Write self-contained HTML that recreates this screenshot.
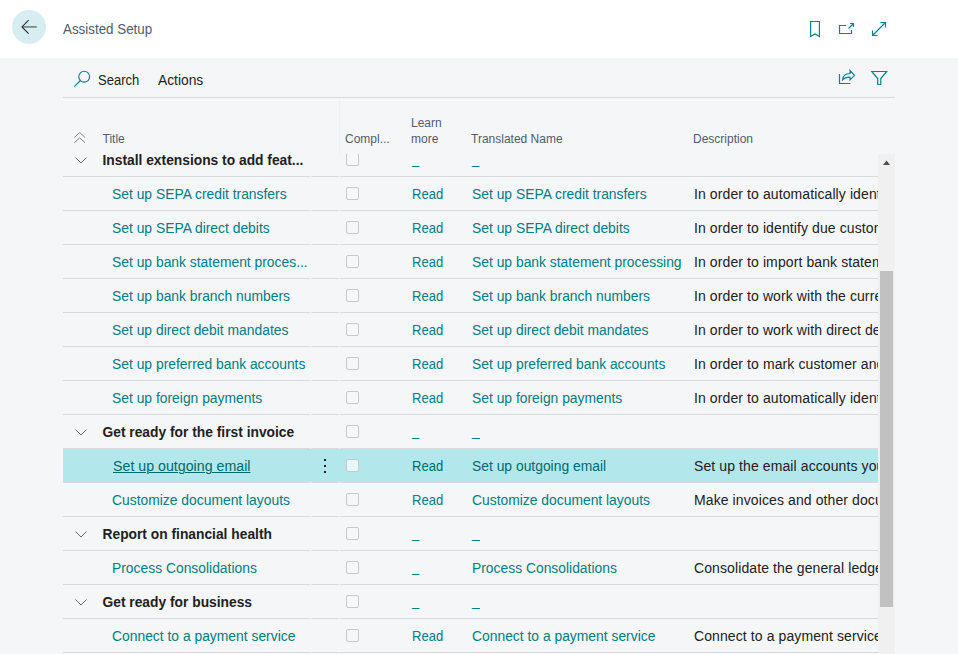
<!DOCTYPE html>
<html><head><meta charset="utf-8"><style>
html,body{margin:0;padding:0;width:958px;height:654px;overflow:hidden;background:#f5f6f8;font-family:"Liberation Sans",sans-serif;}
.top{position:absolute;left:0;top:0;width:958px;height:58px;background:#fff;}
.t{position:absolute;white-space:nowrap;}
.ic{position:absolute;overflow:visible;}
.tbl{position:absolute;left:63px;top:98px;width:815px;height:556px;overflow:hidden;}
.tbl .inner{position:absolute;left:-63px;top:-98px;width:958px;height:654px;}
.ln{position:absolute;height:1px;background:#d8dadd;}
.sel{position:absolute;left:63px;width:815px;height:33px;background:#b2e8ec;top:0}
.cb{position:absolute;width:11px;height:11px;border:1px solid #c8c8c8;border-radius:2px;}
.dot{position:absolute;width:2px;height:2px;background:#212121;}
.hdr{position:absolute;left:63px;top:98px;width:815px;height:56px;background:#f5f6f8;}
</style></head><body>
<div class="top"></div>
<div style="position:absolute;left:12px;top:10px;width:34px;height:34px;border-radius:50%;background:#d6eef1"></div>
<svg class="ic" style="left:0;top:0" width="60" height="58" viewBox="0 0 60 58"><path d="M22.5 26.9 H36.8" fill="none" stroke="#6f7777" stroke-width="1.5"/><path d="M28.6 20.2 L22 26.9 L28.6 33.6" fill="none" stroke="#2a2a2a" stroke-width="1.1"/></svg>
<div class="t" style="left:63px;top:20px;font-size:14px;line-height:18px;color:#505c6d;transform:scaleX(0.955);transform-origin:0 0">Assisted Setup</div>
<svg class="ic" style="left:800px;top:10px" width="100" height="40" viewBox="0 0 100 40">
<path d="M10.6 11.5 H19.4 V26.5 L15 24 L10.6 26.5 Z" fill="none" stroke="#00838a" stroke-width="1.2"/>
<path d="M46 15.5 H39.5 V23.5 H51.5 V20" fill="none" stroke="#00838a" stroke-width="1.2"/>
<path d="M48.5 18.5 L53.5 13.5 M50 13.5 H53.5 V17" fill="none" stroke="#00838a" stroke-width="1.2"/>
<path d="M72.5 25.5 L85.5 12.5 M80.5 12.5 H85.5 V17.5 M72.5 20.5 V25.5 H77.5" fill="none" stroke="#00838a" stroke-width="1.2"/>
</svg>
<svg class="ic" style="left:60px;top:60px" width="40" height="36" viewBox="0 0 40 36"><circle cx="24.2" cy="16.7" r="5.4" fill="none" stroke="#00838a" stroke-width="1.1"/><path d="M20.4 20.5 L14.3 26.6" fill="none" stroke="#00838a" stroke-width="1.1"/></svg>
<div class="t" style="left:98px;top:70.5px;font-size:14px;line-height:18px;color:#212121;transform:scaleX(0.93);transform-origin:0 0">Search</div>
<div class="t" style="left:158px;top:70.5px;font-size:14px;line-height:18px;color:#212121;transform:scaleX(0.985);transform-origin:0 0">Actions</div>
<svg class="ic" style="left:830px;top:60px" width="70" height="36" viewBox="0 0 70 36">
<path d="M9.5 14 V23.5 H20.5" fill="none" stroke="#00838a" stroke-width="1.2"/>
<path d="M12.5 20 C13 15 17 13.5 20 13.5 V10.5 L24.5 15.3 L20 20 V17.2 C17 17 14.5 17.8 12.5 20 Z" fill="none" stroke="#00838a" stroke-width="1.1"/>
<path d="M41.8 11.5 H56.7 L50.8 18.5 V24.5 H47.7 V18.5 Z" fill="none" stroke="#00838a" stroke-width="1.2"/>
</svg>
<div style="position:absolute;left:63px;top:97px;width:832px;height:1px;background:#d8d8dc"></div>
<div class="tbl"><div class="inner">
<svg class="ic" style="left:74.8px;top:156.6px" width="12" height="8" viewBox="0 0 12 8"><path d="M0.5 0.5 L6 6 L11.5 0.5" fill="none" stroke="#6a6a6a" stroke-width="1"/></svg>
<div class="cb" style="left:346px;top:153px;background:#f7f7f7"></div>
<div class="ln" style="top:176px;left:63px;width:247px"></div><div class="ln" style="top:176px;left:311px;width:28px"></div><div class="ln" style="top:176px;left:340px;width:538px"></div>
<div class="cb" style="left:346px;top:187px;background:#f7f7f7"></div>
<div class="ln" style="top:210px;left:63px;width:247px"></div><div class="ln" style="top:210px;left:311px;width:28px"></div><div class="ln" style="top:210px;left:340px;width:538px"></div>
<div class="cb" style="left:346px;top:221px;background:#f7f7f7"></div>
<div class="ln" style="top:244px;left:63px;width:247px"></div><div class="ln" style="top:244px;left:311px;width:28px"></div><div class="ln" style="top:244px;left:340px;width:538px"></div>
<div class="cb" style="left:346px;top:255px;background:#f7f7f7"></div>
<div class="ln" style="top:278px;left:63px;width:247px"></div><div class="ln" style="top:278px;left:311px;width:28px"></div><div class="ln" style="top:278px;left:340px;width:538px"></div>
<div class="cb" style="left:346px;top:289px;background:#f7f7f7"></div>
<div class="ln" style="top:312px;left:63px;width:247px"></div><div class="ln" style="top:312px;left:311px;width:28px"></div><div class="ln" style="top:312px;left:340px;width:538px"></div>
<div class="cb" style="left:346px;top:323px;background:#f7f7f7"></div>
<div class="ln" style="top:346px;left:63px;width:247px"></div><div class="ln" style="top:346px;left:311px;width:28px"></div><div class="ln" style="top:346px;left:340px;width:538px"></div>
<div class="cb" style="left:346px;top:357px;background:#f7f7f7"></div>
<div class="ln" style="top:380px;left:63px;width:247px"></div><div class="ln" style="top:380px;left:311px;width:28px"></div><div class="ln" style="top:380px;left:340px;width:538px"></div>
<div class="cb" style="left:346px;top:391px;background:#f7f7f7"></div>
<div class="ln" style="top:414px;left:63px;width:247px"></div><div class="ln" style="top:414px;left:311px;width:28px"></div><div class="ln" style="top:414px;left:340px;width:538px"></div>
<svg class="ic" style="left:74.8px;top:428.6px" width="12" height="8" viewBox="0 0 12 8"><path d="M0.5 0.5 L6 6 L11.5 0.5" fill="none" stroke="#6a6a6a" stroke-width="1"/></svg>
<div class="cb" style="left:346px;top:425px;background:#f7f7f7"></div>
<div class="ln" style="top:448px;left:63px;width:247px"></div><div class="ln" style="top:448px;left:311px;width:28px"></div><div class="ln" style="top:448px;left:340px;width:538px"></div>
<div class="sel" style="top:449px"></div>
<div class="dot" style="left:324px;top:459px"></div><div class="dot" style="left:324px;top:465px"></div><div class="dot" style="left:324px;top:471px"></div>
<div class="cb" style="left:346px;top:459px;background:#e8f7f9"></div>
<div class="ln" style="top:482px;left:63px;width:247px"></div><div class="ln" style="top:482px;left:311px;width:28px"></div><div class="ln" style="top:482px;left:340px;width:538px"></div>
<div class="cb" style="left:346px;top:493px;background:#f7f7f7"></div>
<div class="ln" style="top:516px;left:63px;width:247px"></div><div class="ln" style="top:516px;left:311px;width:28px"></div><div class="ln" style="top:516px;left:340px;width:538px"></div>
<svg class="ic" style="left:74.8px;top:530.6px" width="12" height="8" viewBox="0 0 12 8"><path d="M0.5 0.5 L6 6 L11.5 0.5" fill="none" stroke="#6a6a6a" stroke-width="1"/></svg>
<div class="cb" style="left:346px;top:527px;background:#f7f7f7"></div>
<div class="ln" style="top:550px;left:63px;width:247px"></div><div class="ln" style="top:550px;left:311px;width:28px"></div><div class="ln" style="top:550px;left:340px;width:538px"></div>
<div class="cb" style="left:346px;top:561px;background:#f7f7f7"></div>
<div class="ln" style="top:584px;left:63px;width:247px"></div><div class="ln" style="top:584px;left:311px;width:28px"></div><div class="ln" style="top:584px;left:340px;width:538px"></div>
<svg class="ic" style="left:74.8px;top:598.6px" width="12" height="8" viewBox="0 0 12 8"><path d="M0.5 0.5 L6 6 L11.5 0.5" fill="none" stroke="#6a6a6a" stroke-width="1"/></svg>
<div class="cb" style="left:346px;top:595px;background:#f7f7f7"></div>
<div class="ln" style="top:618px;left:63px;width:247px"></div><div class="ln" style="top:618px;left:311px;width:28px"></div><div class="ln" style="top:618px;left:340px;width:538px"></div>
<div class="cb" style="left:346px;top:629px;background:#f7f7f7"></div>
<div class="ln" style="top:652px;left:63px;width:247px"></div><div class="ln" style="top:652px;left:311px;width:28px"></div><div class="ln" style="top:652px;left:340px;width:538px"></div>
<div class="t" style="left:102.5px;top:152.94px;font-size:13.8px;line-height:16px;color:#212121;font-weight:bold;">Install extensions to add feat...</div>
<div class="t" style="left:412px;top:151.37px;font-size:14px;line-height:16px;color:#007c83;font-weight:normal;transform:scaleX(0.93);transform-origin:0 0;">_</div>
<div class="t" style="left:472px;top:151.37px;font-size:14px;line-height:16px;color:#007c83;font-weight:normal;transform:scaleX(0.93);transform-origin:0 0;">_</div>
<div class="t" style="left:112px;top:186.37px;font-size:14px;line-height:16px;color:#007c83;font-weight:normal;transform:scaleX(0.99);transform-origin:0 0;">Set up SEPA credit transfers</div>
<div class="t" style="left:412px;top:186.37px;font-size:14px;line-height:16px;color:#007c83;font-weight:normal;transform:scaleX(0.93);transform-origin:0 0;">Read</div>
<div class="t" style="left:471.8px;top:186.37px;font-size:14px;line-height:16px;color:#007c83;font-weight:normal;transform:scaleX(0.99);transform-origin:0 0;">Set up SEPA credit transfers</div>
<div class="t" style="left:694px;top:186.37px;font-size:14px;line-height:16px;color:#212121;font-weight:normal;letter-spacing:0.1px;">In order to automatically identify</div>
<div class="t" style="left:112px;top:220.37px;font-size:14px;line-height:16px;color:#007c83;font-weight:normal;transform:scaleX(0.99);transform-origin:0 0;">Set up SEPA direct debits</div>
<div class="t" style="left:412px;top:220.37px;font-size:14px;line-height:16px;color:#007c83;font-weight:normal;transform:scaleX(0.93);transform-origin:0 0;">Read</div>
<div class="t" style="left:471.8px;top:220.37px;font-size:14px;line-height:16px;color:#007c83;font-weight:normal;transform:scaleX(0.99);transform-origin:0 0;">Set up SEPA direct debits</div>
<div class="t" style="left:694px;top:220.37px;font-size:14px;line-height:16px;color:#212121;font-weight:normal;letter-spacing:0.1px;">In order to identify due customer</div>
<div class="t" style="left:112px;top:254.37px;font-size:14px;line-height:16px;color:#007c83;font-weight:normal;transform:scaleX(0.99);transform-origin:0 0;">Set up bank statement proces...</div>
<div class="t" style="left:412px;top:254.37px;font-size:14px;line-height:16px;color:#007c83;font-weight:normal;transform:scaleX(0.93);transform-origin:0 0;">Read</div>
<div class="t" style="left:471.8px;top:254.37px;font-size:14px;line-height:16px;color:#007c83;font-weight:normal;transform:scaleX(0.99);transform-origin:0 0;">Set up bank statement processing</div>
<div class="t" style="left:694px;top:254.37px;font-size:14px;line-height:16px;color:#212121;font-weight:normal;letter-spacing:0.1px;">In order to import bank statements</div>
<div class="t" style="left:112px;top:288.37px;font-size:14px;line-height:16px;color:#007c83;font-weight:normal;transform:scaleX(0.99);transform-origin:0 0;">Set up bank branch numbers</div>
<div class="t" style="left:412px;top:288.37px;font-size:14px;line-height:16px;color:#007c83;font-weight:normal;transform:scaleX(0.93);transform-origin:0 0;">Read</div>
<div class="t" style="left:471.8px;top:288.37px;font-size:14px;line-height:16px;color:#007c83;font-weight:normal;transform:scaleX(0.99);transform-origin:0 0;">Set up bank branch numbers</div>
<div class="t" style="left:694px;top:288.37px;font-size:14px;line-height:16px;color:#212121;font-weight:normal;letter-spacing:0.1px;">In order to work with the currency</div>
<div class="t" style="left:112px;top:322.37px;font-size:14px;line-height:16px;color:#007c83;font-weight:normal;transform:scaleX(0.99);transform-origin:0 0;">Set up direct debit mandates</div>
<div class="t" style="left:412px;top:322.37px;font-size:14px;line-height:16px;color:#007c83;font-weight:normal;transform:scaleX(0.93);transform-origin:0 0;">Read</div>
<div class="t" style="left:471.8px;top:322.37px;font-size:14px;line-height:16px;color:#007c83;font-weight:normal;transform:scaleX(0.99);transform-origin:0 0;">Set up direct debit mandates</div>
<div class="t" style="left:694px;top:322.37px;font-size:14px;line-height:16px;color:#212121;font-weight:normal;letter-spacing:0.1px;">In order to work with direct debits</div>
<div class="t" style="left:112px;top:356.37px;font-size:14px;line-height:16px;color:#007c83;font-weight:normal;transform:scaleX(0.99);transform-origin:0 0;">Set up preferred bank accounts</div>
<div class="t" style="left:412px;top:356.37px;font-size:14px;line-height:16px;color:#007c83;font-weight:normal;transform:scaleX(0.93);transform-origin:0 0;">Read</div>
<div class="t" style="left:471.8px;top:356.37px;font-size:14px;line-height:16px;color:#007c83;font-weight:normal;transform:scaleX(0.99);transform-origin:0 0;">Set up preferred bank accounts</div>
<div class="t" style="left:694px;top:356.37px;font-size:14px;line-height:16px;color:#212121;font-weight:normal;letter-spacing:0.1px;">In order to mark customer and</div>
<div class="t" style="left:112px;top:390.37px;font-size:14px;line-height:16px;color:#007c83;font-weight:normal;transform:scaleX(0.99);transform-origin:0 0;">Set up foreign payments</div>
<div class="t" style="left:412px;top:390.37px;font-size:14px;line-height:16px;color:#007c83;font-weight:normal;transform:scaleX(0.93);transform-origin:0 0;">Read</div>
<div class="t" style="left:471.8px;top:390.37px;font-size:14px;line-height:16px;color:#007c83;font-weight:normal;transform:scaleX(0.99);transform-origin:0 0;">Set up foreign payments</div>
<div class="t" style="left:694px;top:390.37px;font-size:14px;line-height:16px;color:#212121;font-weight:normal;letter-spacing:0.1px;">In order to automatically identify</div>
<div class="t" style="left:102.5px;top:425.44px;font-size:13.8px;line-height:16px;color:#212121;font-weight:bold;">Get ready for the first invoice</div>
<div class="t" style="left:412px;top:423.37px;font-size:14px;line-height:16px;color:#007c83;font-weight:normal;transform:scaleX(0.93);transform-origin:0 0;">_</div>
<div class="t" style="left:471.8px;top:423.37px;font-size:14px;line-height:16px;color:#007c83;font-weight:normal;transform:scaleX(0.99);transform-origin:0 0;">_</div>
<div class="t" style="left:113px;top:458.37px;font-size:14px;line-height:16px;color:#006870;font-weight:normal;transform:scaleX(1.015);transform-origin:0 0;text-decoration:underline;text-underline-offset:1px;text-decoration-thickness:1px;">Set up outgoing email</div>
<div class="t" style="left:412px;top:458.37px;font-size:14px;line-height:16px;color:#006870;font-weight:normal;transform:scaleX(0.93);transform-origin:0 0;">Read</div>
<div class="t" style="left:471.8px;top:458.37px;font-size:14px;line-height:16px;color:#006870;font-weight:normal;transform:scaleX(0.99);transform-origin:0 0;">Set up outgoing email</div>
<div class="t" style="left:694px;top:458.37px;font-size:14px;line-height:16px;color:#212121;font-weight:normal;letter-spacing:0.1px;">Set up the email accounts your</div>
<div class="t" style="left:112px;top:492.37px;font-size:14px;line-height:16px;color:#007c83;font-weight:normal;transform:scaleX(0.99);transform-origin:0 0;">Customize document layouts</div>
<div class="t" style="left:412px;top:492.37px;font-size:14px;line-height:16px;color:#007c83;font-weight:normal;transform:scaleX(0.93);transform-origin:0 0;">Read</div>
<div class="t" style="left:471.8px;top:492.37px;font-size:14px;line-height:16px;color:#007c83;font-weight:normal;transform:scaleX(0.99);transform-origin:0 0;">Customize document layouts</div>
<div class="t" style="left:694px;top:492.37px;font-size:14px;line-height:16px;color:#212121;font-weight:normal;letter-spacing:0.1px;">Make invoices and other documents</div>
<div class="t" style="left:102.5px;top:527.44px;font-size:13.8px;line-height:16px;color:#212121;font-weight:bold;">Report on financial health</div>
<div class="t" style="left:412px;top:525.37px;font-size:14px;line-height:16px;color:#007c83;font-weight:normal;transform:scaleX(0.93);transform-origin:0 0;">_</div>
<div class="t" style="left:471.8px;top:525.37px;font-size:14px;line-height:16px;color:#007c83;font-weight:normal;transform:scaleX(0.99);transform-origin:0 0;">_</div>
<div class="t" style="left:112px;top:560.37px;font-size:14px;line-height:16px;color:#007c83;font-weight:normal;transform:scaleX(0.99);transform-origin:0 0;">Process Consolidations</div>
<div class="t" style="left:412px;top:559.37px;font-size:14px;line-height:16px;color:#007c83;font-weight:normal;transform:scaleX(0.93);transform-origin:0 0;">_</div>
<div class="t" style="left:471.8px;top:560.37px;font-size:14px;line-height:16px;color:#007c83;font-weight:normal;transform:scaleX(0.99);transform-origin:0 0;">Process Consolidations</div>
<div class="t" style="left:694px;top:560.37px;font-size:14px;line-height:16px;color:#212121;font-weight:normal;letter-spacing:0.1px;">Consolidate the general ledger</div>
<div class="t" style="left:102.5px;top:595.44px;font-size:13.8px;line-height:16px;color:#212121;font-weight:bold;">Get ready for business</div>
<div class="t" style="left:412px;top:593.37px;font-size:14px;line-height:16px;color:#007c83;font-weight:normal;transform:scaleX(0.93);transform-origin:0 0;">_</div>
<div class="t" style="left:471.8px;top:593.37px;font-size:14px;line-height:16px;color:#007c83;font-weight:normal;transform:scaleX(0.99);transform-origin:0 0;">_</div>
<div class="t" style="left:112px;top:628.37px;font-size:14px;line-height:16px;color:#007c83;font-weight:normal;transform:scaleX(0.99);transform-origin:0 0;">Connect to a payment service</div>
<div class="t" style="left:412px;top:628.37px;font-size:14px;line-height:16px;color:#007c83;font-weight:normal;transform:scaleX(0.93);transform-origin:0 0;">Read</div>
<div class="t" style="left:471.8px;top:628.37px;font-size:14px;line-height:16px;color:#007c83;font-weight:normal;transform:scaleX(0.99);transform-origin:0 0;">Connect to a payment service</div>
<div class="t" style="left:694px;top:628.37px;font-size:14px;line-height:16px;color:#212121;font-weight:normal;letter-spacing:0.1px;">Connect to a payment service to</div>
</div></div>
<div class="hdr"></div>
<div style="position:absolute;left:339px;top:98px;width:1px;height:56px;background:#eef0f2"></div>
<svg class="ic" style="left:70px;top:128px" width="20" height="20" viewBox="0 0 20 20"><path d="M4.3 9.5 L9.7 4.5 L15.1 9.5 M4.3 14.8 L9.7 9.8 L15.1 14.8" fill="none" stroke="#808080" stroke-width="1"/></svg>
<div class="t" style="left:102.5px;top:131px;font-size:12px;line-height:16px;color:#505c6d">Title</div>
<div class="t" style="left:345px;top:131px;font-size:12px;line-height:16px;color:#505c6d">Compl...</div>
<div class="t" style="left:411px;top:115px;font-size:12px;line-height:16px;color:#505c6d">Learn<br>more</div>
<div class="t" style="left:471px;top:131px;font-size:12px;line-height:16px;color:#505c6d">Translated Name</div>
<div class="t" style="left:693px;top:131px;font-size:12px;line-height:16px;color:#505c6d">Description</div>
<div style="position:absolute;left:878px;top:154px;width:17px;height:500px;background:#f0f0f0"></div>
<svg class="ic" style="left:878px;top:154px" width="17" height="17" viewBox="0 0 17 17"><path d="M5 11 L8.5 6.5 L12 11 Z" fill="#505050"/></svg>
<div style="position:absolute;left:880px;top:271px;width:13px;height:336px;background:#c1c1c1"></div>
</body></html>
